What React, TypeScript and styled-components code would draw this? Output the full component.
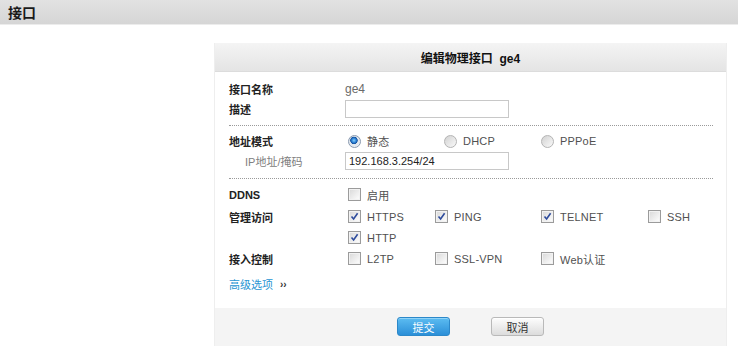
import React from 'react';
import styled, { createGlobalStyle } from 'styled-components';

const GlobalStyle = createGlobalStyle`
  html, body {
    margin: 0;
    padding: 0;
    background: #fff;
    font-family: "Liberation Sans", "Noto Sans CJK SC", sans-serif;
    font-size: 11px;
    color: #333;
  }
`

const TopBar = styled.div`
  height: 25px;
  box-sizing: border-box;
  padding-left: 8px;
  display: flex;
  align-items: center;
  background: linear-gradient(#e2e2e2, #d6d6d6);
  border-bottom: 1px solid #ececec;
  font-size: 14px;
  font-weight: bold;
  color: #1a1a1a;
`

const Panel = styled.div`
  margin: 18px 0 0 214px;
  width: 513px;
  box-sizing: border-box;
  border-left: 1px solid #eeeeee;
  border-right: 1px solid #eeeeee;
`

const PanelTitle = styled.div`
  height: 28px;
  display: flex;
  align-items: center;
  justify-content: center;
  background: linear-gradient(#f4f4f4, #e4e4e4);
  border-bottom: 1px solid #dcdcdc;
  font-size: 12px;
  font-weight: bold;
  color: #111;
`

const Body = styled.div`
  padding: 0 13px 0 14px;
`

const Section = styled.div<{ $top: number; $bottom: number; $dotted?: boolean }>`
  padding-top: ${p => p.$top}px;
  padding-bottom: ${p => p.$bottom}px;
  border-bottom: ${p => (p.$dotted ? '1px dotted #9a9a9a' : 'none')};
`

const Row = styled.div<{ $h?: number }>`
  display: flex;
  align-items: center;
  height: ${p => p.$h ?? 20}px;
`

const Label = styled.div<{ $sub?: boolean }>`
  width: 116px;
  flex: none;
  box-sizing: border-box;
  padding-left: ${p => (p.$sub ? 16 : 0)}px;
  font-weight: ${p => (p.$sub ? 'normal' : 'bold')};
  color: ${p => (p.$sub ? '#808080' : '#222')};
`

const Value = styled.span`
  color: #6a6a6a;
  font-size: 12px;
`

const TextInput = styled.input`
  width: 164px;
  height: 18px;
  box-sizing: border-box;
  margin: 0;
  padding: 0 3px;
  border: 1px solid #c8c8c8;
  font-family: "Liberation Sans", sans-serif;
  font-size: 11px;
  color: #222;
  outline: none;
`

const Options = styled.div<{ $cols: string }>`
  display: grid;
  grid-template-columns: ${p => p.$cols};
  padding-left: 3px;
`

const Option = styled.label`
  display: flex;
  align-items: center;
  gap: 6px;
  color: #505050;
  font-size: 11px;
  letter-spacing: 0.2px;
`

const Box = styled.span`
  width: 11px;
  height: 11px;
  flex: none;
  border: 1px solid #9b9b9b;
  background: linear-gradient(135deg, #d8d8d8, #ffffff);
  display: flex;
  align-items: center;
  justify-content: center;
  box-shadow: inset 0 0 0 1px #f2f2f2;
`

const Circle = styled.span<{ $on?: boolean }>`
  width: 11px;
  height: 11px;
  flex: none;
  border-radius: 50%;
  border: 1px solid ${p => (p.$on ? '#8a9ab0' : '#b4b4b4')};
  background: ${p => (p.$on ? 'radial-gradient(circle at 45% 40%, #7fd0ff 0, #1f6fc6 30%, #134f99 38%, #dfe5ec 45%, #f4f6f8 100%)' : 'linear-gradient(135deg, #d2d2d2, #fafafa)')};
`

const Advanced = styled.div`
  display: flex;
  align-items: center;
  gap: 7px;
  height: 20px;
  margin-top: 5px;
  margin-bottom: 14px;
  color: #2795d3;
  font-size: 11px;
`

const Chevrons = styled.span`
  color: #333;
  font-weight: bold;
  font-size: 10px;
`

const Footer = styled.div`
  height: 40px;
  background: #f4f4f4;
  display: flex;
  justify-content: center;
  align-items: flex-start;
  padding-top: 9px;
  gap: 41px;
`

const Button = styled.button<{ $primary?: boolean }>`
  width: 53px;
  height: 19px;
  margin: 0;
  padding: 0;
  border-radius: 3px;
  font-family: "Noto Sans CJK SC", sans-serif;
  font-size: 11px;
  border: 1px solid ${p => (p.$primary ? '#2c88c9' : '#b9b9b9')};
  color: ${p => (p.$primary ? '#fff' : '#333')};
  background: ${p => (p.$primary ? 'linear-gradient(#5cbcf1, #2b8fd8)' : 'linear-gradient(#fdfdfd, #dcdcdc)')};
  box-shadow: ${p => (p.$primary ? 'inset 0 1px 0 #8ed3f8' : 'inset 0 1px 0 #fff')};
`

const Check = ({ on }: { on?: boolean }) => (
  <Box>
    {on && (
      <svg width="9" height="9" viewBox="0 0 9 9">
        <path d="M1.5 4.5 L3.6 7 L7.6 1.2" fill="none" stroke="#2d4b9c" strokeWidth="1.6" />
      </svg>
    )}
  </Box>
);

const CB = ({ label, on }: { label: string; on?: boolean }) => (
  <Option>
    <Check on={on} />
    {label}
  </Option>
);

const RB = ({ label, on }: { label: string; on?: boolean }) => (
  <Option>
    <Circle $on={on} />
    {label}
  </Option>
);

const CHECK_COLS = '87px 106px 107px 80px';

export default function App() {
  return (
    <>
      <GlobalStyle />
      <TopBar>接口</TopBar>
      <Panel>
        <PanelTitle>编辑物理接口&nbsp;&nbsp;ge4</PanelTitle>
        <Body>
          <Section $top={7} $bottom={6} $dotted>
            <Row>
              <Label>接口名称</Label>
              <Value>ge4</Value>
            </Row>
            <Row>
              <Label>描述</Label>
              <TextInput defaultValue="" />
            </Row>
          </Section>
          <Section $top={5} $bottom={7} $dotted>
            <Row>
              <Label>地址模式</Label>
              <Options $cols="96px 97px 100px">
                <RB label="静态" on />
                <RB label="DHCP" />
                <RB label="PPPoE" />
              </Options>
            </Row>
            <Row>
              <Label $sub>IP地址/掩码</Label>
              <TextInput defaultValue="192.168.3.254/24" />
            </Row>
          </Section>
          <Section $top={4} $bottom={0}>
            <Row $h={23}>
              <Label>DDNS</Label>
              <Options $cols={CHECK_COLS}>
                <CB label="启用" />
              </Options>
            </Row>
            <Row $h={21}>
              <Label>管理访问</Label>
              <Options $cols={CHECK_COLS}>
                <CB label="HTTPS" on />
                <CB label="PING" on />
                <CB label="TELNET" on />
                <CB label="SSH" />
              </Options>
            </Row>
            <Row $h={21}>
              <Label />
              <Options $cols={CHECK_COLS}>
                <CB label="HTTP" on />
              </Options>
            </Row>
            <Row $h={21}>
              <Label>接入控制</Label>
              <Options $cols={CHECK_COLS}>
                <CB label="L2TP" />
                <CB label="SSL-VPN" />
                <CB label="Web认证" />
              </Options>
            </Row>
          </Section>
          <Advanced>
            高级选项 <Chevrons>››</Chevrons>
          </Advanced>
        </Body>
        <Footer>
          <Button $primary>提交</Button>
          <Button>取消</Button>
        </Footer>
      </Panel>
    </>
  );
}
